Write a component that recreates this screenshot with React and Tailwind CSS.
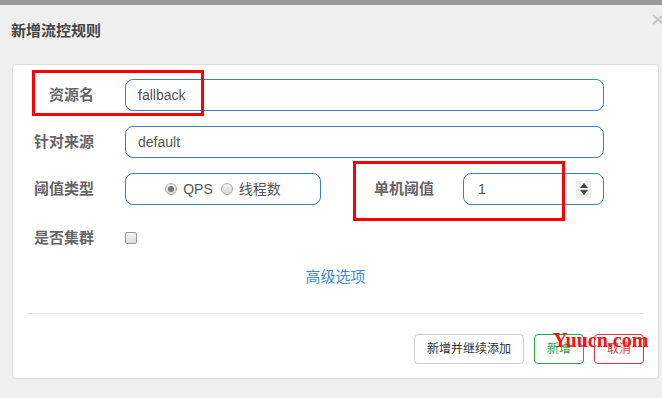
import React from "react";

const font = { fontFamily: '"Liberation Sans", "Noto Sans CJK SC", sans-serif' };

const inputCls =
  "flex h-[32px] flex-1 items-center rounded-[8px] border border-[#3f7fbf] bg-white pl-[12px] text-[14px] text-[#555]";

const Label = ({ children, className = "" }) => (
  <div className={`w-[67px] shrink-0 text-right text-[15px] font-bold text-[#666] ${className}`}>{children}</div>
);

const Radio = ({ checked, label }) => (
  <span className="flex items-center gap-[6px]">
    <span className="flex h-[12px] w-[12px] items-center justify-center rounded-full border border-[#aaa] bg-gradient-to-b from-[#f4f4f4] to-[#d8d8d8]">
      {checked && <span className="h-[6px] w-[6px] rounded-full bg-[#777]" />}
    </span>
    <span className="text-[14px] text-[#555]">{label}</span>
  </span>
);

export default function App() {
  return (
    <div className="relative h-[398px] w-[662px] overflow-hidden bg-[#efefef]" style={font}>
      <div className="h-[5px] bg-[#999]" />

      <div className="h-[59px] pl-[11px] pt-[16px]">
        <h1 className="text-[15px] font-bold leading-[20px] text-[#444]">新增流控规则</h1>
      </div>
      <svg className="absolute left-[652px] top-[14px]" width="12" height="11" viewBox="0 0 12 11">
        <path d="M1 1L11 10M11 1L1 10" stroke="#c8c8c8" strokeWidth="2.2" />
      </svg>

      <section className="ml-[12px] mr-[3px] rounded-[4px] border border-[#ddd] bg-white px-[14px] pb-[14px] pt-[14px]">
        <div className="flex flex-col gap-[15px] pr-[40px]">
          <div className="flex items-center">
            <Label>资源名</Label>
            <div className={`ml-[31px] ${inputCls}`}>fallback</div>
          </div>
          <div className="flex items-center">
            <Label>针对来源</Label>
            <div className={`ml-[31px] ${inputCls}`}>default</div>
          </div>
          <div className="flex items-center">
            <Label>阈值类型</Label>
            <div className="ml-[31px] flex h-[32px] w-[196px] items-center justify-center gap-[8px] rounded-[8px] border border-[#3f7fbf]">
              <Radio checked label="QPS" />
              <Radio label="线程数" />
            </div>
            <Label className="ml-[46px]">单机阈值</Label>
            <div className={`ml-[29px] justify-between pr-[12px] ${inputCls}`}>
              <span className="pl-[2px]">1</span>
              <span className="flex h-[17px] w-[15px] flex-col items-center justify-center gap-[2px] bg-[#ececec]">
                <svg width="8" height="5" viewBox="0 0 8 5"><path d="M4 0L8 5H0z" fill="#444" /></svg>
                <svg width="8" height="5" viewBox="0 0 8 5"><path d="M0 0h8L4 5z" fill="#444" /></svg>
              </span>
            </div>
          </div>
        </div>

        <div className="mt-[23px] flex h-[20px] items-center">
          <Label>是否集群</Label>
          <span className="ml-[31px] h-[12px] w-[12px] rounded-[2px] border border-[#999] bg-gradient-to-b from-[#f2f2f2] to-[#dcdcdc]" />
        </div>

        <div className="mt-[19px] text-center text-[15px] leading-[20px] text-[#3d8ad6]">高级选项</div>

        <div className="mt-[26px] h-px bg-[#e5e5e5]" />

        <div className="mt-[20px] flex justify-end gap-[10px]">
          <button className="h-[30px] w-[110px] rounded-[4px] border border-[#ccc] bg-white text-[12px] text-[#333]">新增并继续添加</button>
          <button className="h-[30px] w-[50px] rounded-[4px] border border-[#28a745] bg-white text-[12px] text-[#28a745]">新增</button>
          <button className="h-[30px] w-[50px] rounded-[4px] border border-[#dc3545] bg-white text-[12px] text-[#dc3545]">取消</button>
        </div>
      </section>

      {/* annotation boxes */}
      <div className="absolute left-[32px] top-[70px] h-[46px] w-[172px] border-[3px] border-[#ff0000]" />
      <div className="absolute left-[353px] top-[161px] h-[60px] w-[212px] border-[3px] border-[#ff0000]" />

      <div
        className="absolute left-[553px] top-[328px] text-[20px] font-bold leading-[24px] text-[#ff1010]"
        style={{ fontFamily: '"Liberation Serif", serif' }}
      >
        Yuucn.com
      </div>
    </div>
  );
}
